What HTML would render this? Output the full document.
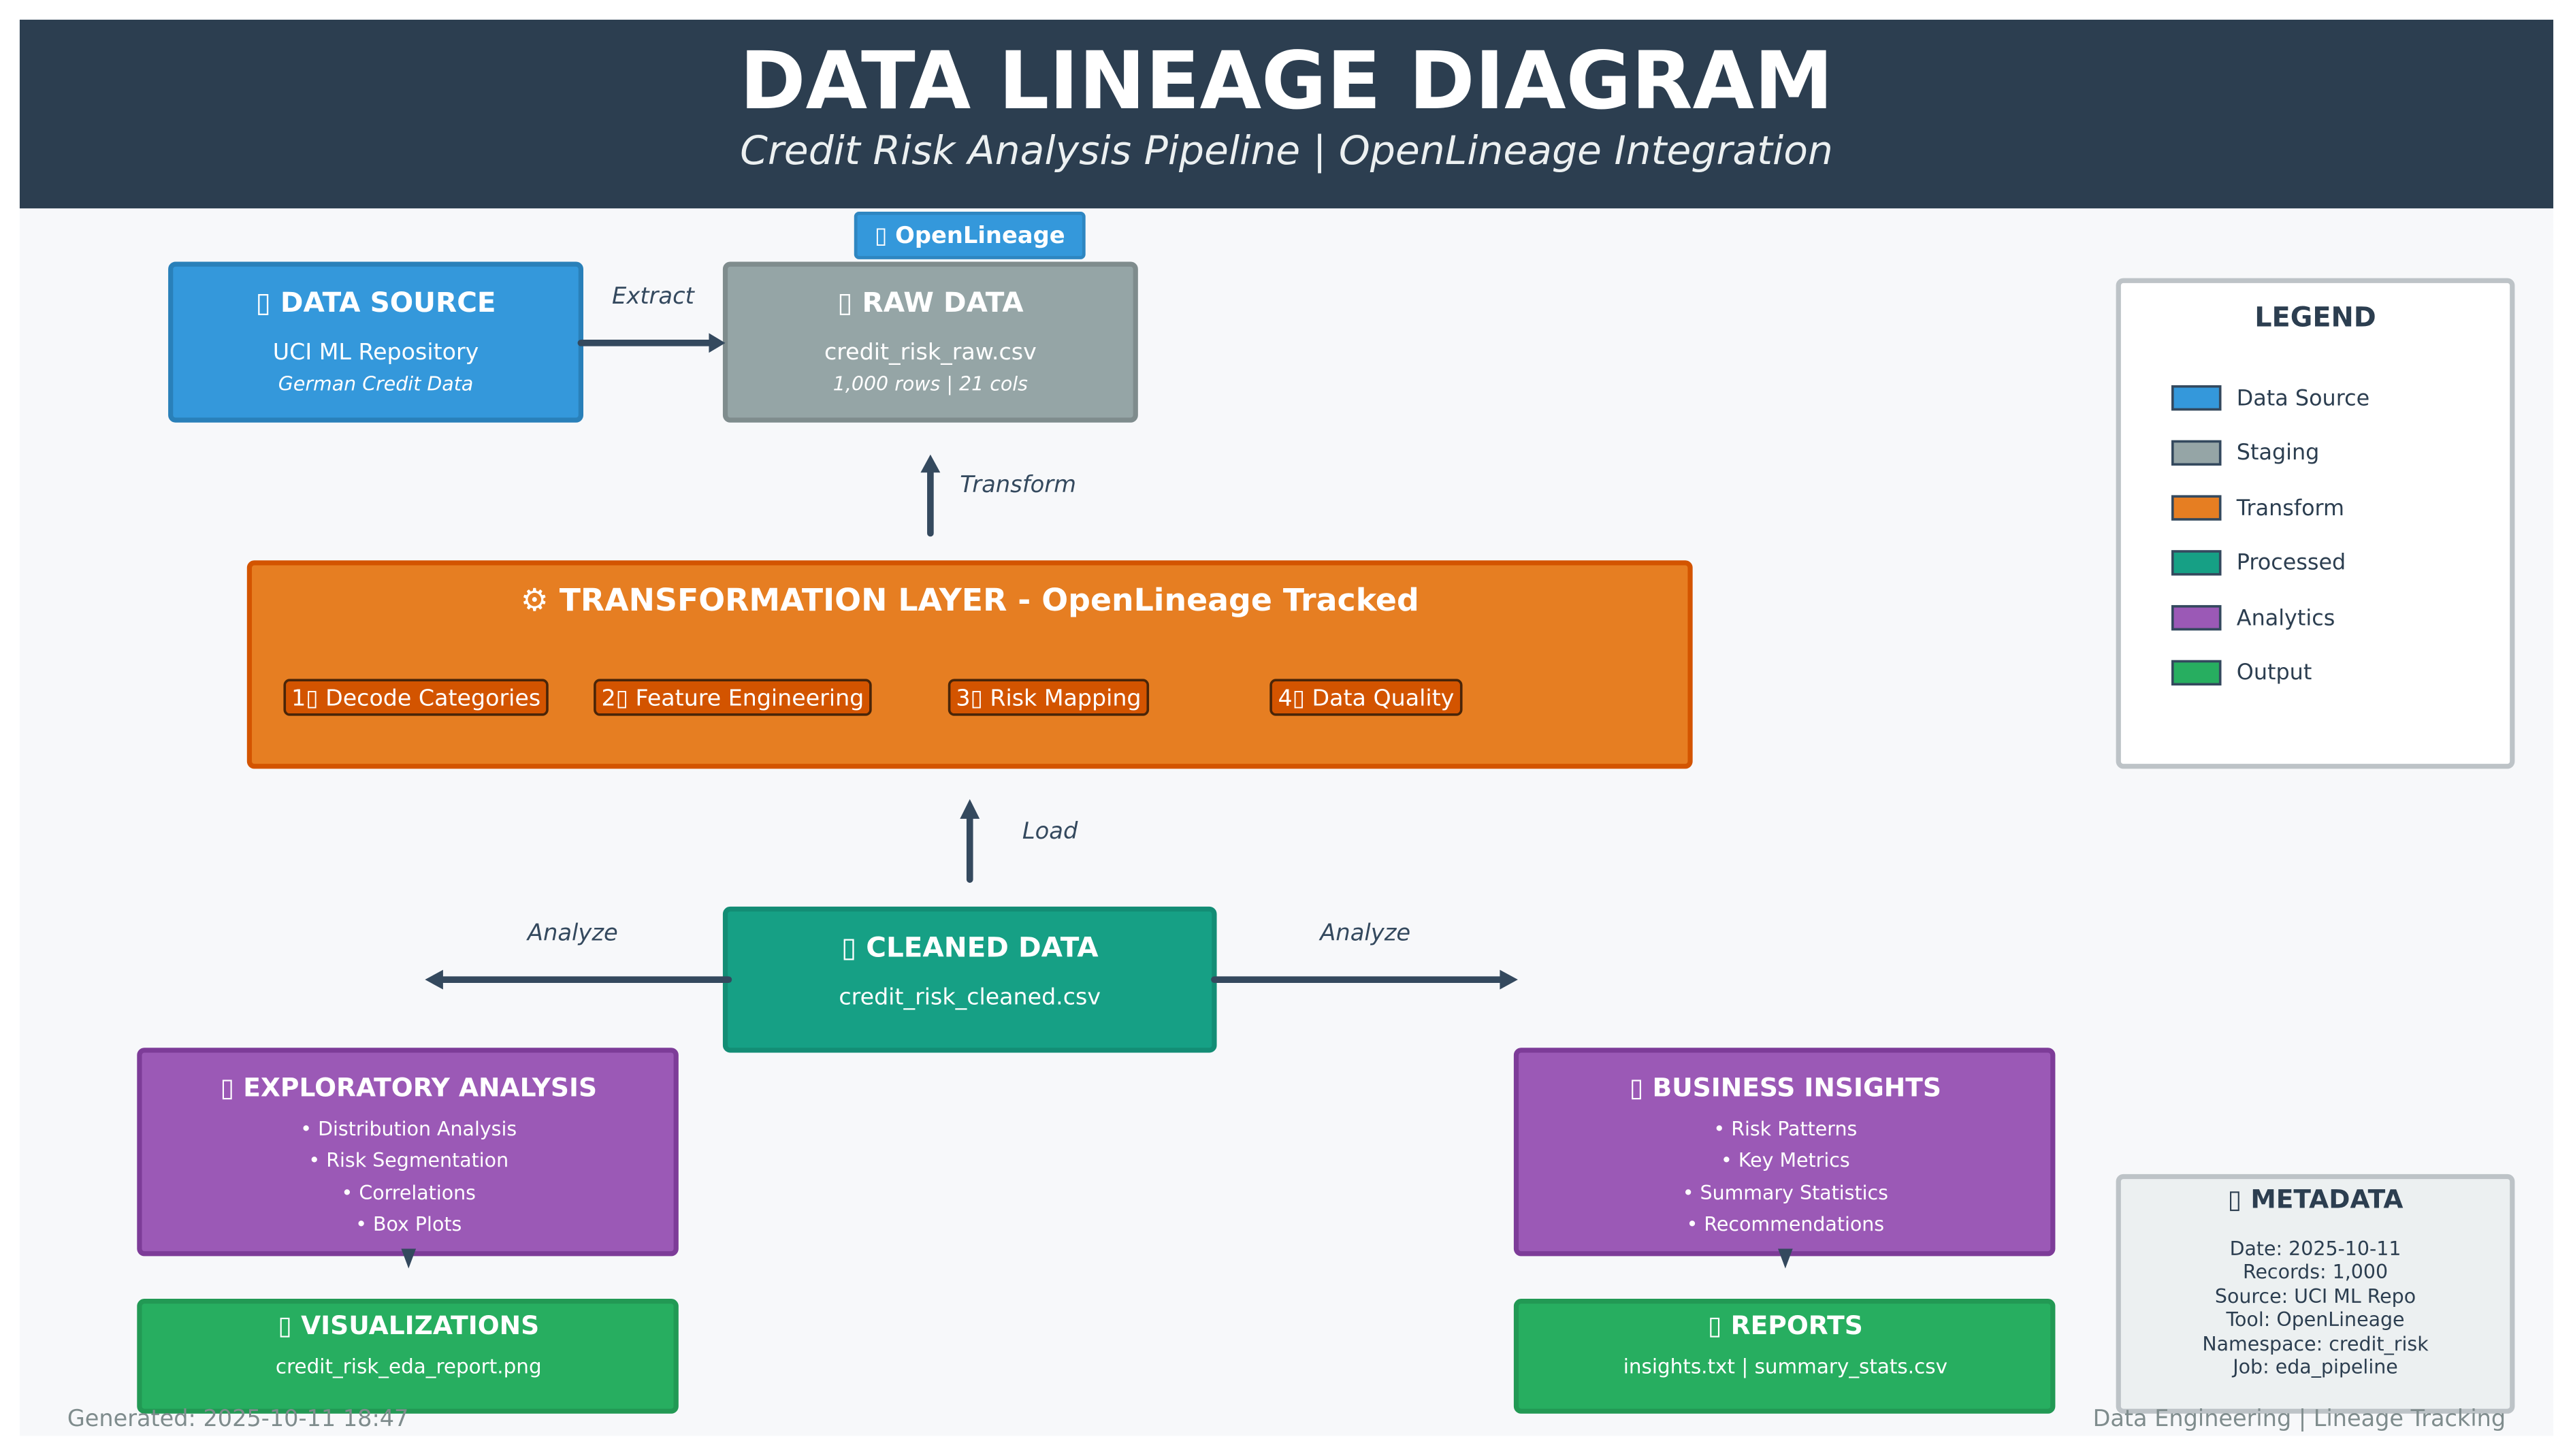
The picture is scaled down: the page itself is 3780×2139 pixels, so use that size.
<!DOCTYPE html>
<html><head><meta charset="utf-8"><style>
html,body{margin:0;padding:0;background:#fff;}
svg{display:block;}
text{font-family:"DejaVu Sans","Liberation Sans",sans-serif;}
</style></head><body>
<svg width="3780" height="2139" viewBox="0 0 1568 887.3" preserveAspectRatio="none" xmlns="http://www.w3.org/2000/svg">
<rect x="0" y="0" width="1568" height="888" fill="#ffffff"/>
<rect x="12" y="12" width="1544" height="863" fill="#f7f8fa"/>
<rect x="12" y="12" width="1544" height="115" fill="#2c3e50"/>
<text x="784" y="66" text-anchor="middle" font-size="48.5" font-weight="bold" fill="#ffffff">DATA LINEAGE DIAGRAM</text>
<text x="784" y="100" text-anchor="middle" font-size="24.2" font-style="italic" fill="#ecf0f1">Credit Risk Analysis Pipeline | OpenLineage Integration</text>

<g stroke-linecap="round">
<rect x="521.5" y="130" width="139" height="27" rx="2" fill="#3498db" stroke="#2e86c1" stroke-width="2"/>
<text x="591" y="148" text-anchor="middle" font-size="14" font-weight="bold" fill="#fff">▯ OpenLineage</text>

<rect x="104" y="161" width="250" height="95" rx="3" fill="#3498db" stroke="#2980b9" stroke-width="3"/>
<text x="229" y="190" text-anchor="middle" font-size="16.8" font-weight="bold" fill="#fff">▯ DATA SOURCE</text>
<text x="229" y="219" text-anchor="middle" font-size="13.8" fill="#fff">UCI ML Repository</text>
<text x="229" y="238" text-anchor="middle" font-size="11.8" font-style="italic" fill="#fff">German Credit Data</text>

<rect x="442" y="161" width="250" height="95" rx="3" fill="#95a5a6" stroke="#7f8c8d" stroke-width="3"/>
<text x="567" y="190" text-anchor="middle" font-size="16.8" font-weight="bold" fill="#fff">▯ RAW DATA</text>
<text x="567" y="219" text-anchor="middle" font-size="13.8" fill="#fff">credit_risk_raw.csv</text>
<text x="567" y="238" text-anchor="middle" font-size="11.8" font-style="italic" fill="#fff">1,000 rows | 21 cols</text>

<line x1="354" y1="209" x2="434" y2="209" stroke="#34495e" stroke-width="4"/>
<path d="M432,203 L442,209 L432,215 Z" fill="#34495e"/>
<text x="398" y="185" text-anchor="middle" font-size="14" font-style="italic" fill="#34495e">Extract</text>

<line x1="567" y1="325" x2="567" y2="286" stroke="#34495e" stroke-width="4"/>
<path d="M561,288 L567,277 L573,288 Z" fill="#34495e"/>
<text x="585" y="300" font-size="14" font-style="italic" fill="#34495e">Transform</text>

<rect x="152" y="343" width="878" height="124" rx="3" fill="#e67e22" stroke="#d35400" stroke-width="3"/>
<text x="591" y="372" text-anchor="middle" font-size="19" font-weight="bold" fill="#fff">⚙ TRANSFORMATION LAYER - OpenLineage Tracked</text>
<g font-size="13.8" fill="#fff" text-anchor="middle">
<rect x="173.5" y="414.5" width="160" height="21" rx="3" fill="#d35400" stroke="#4a2508" stroke-width="1.5"/>
<text x="253.5" y="430">1▯ Decode Categories</text>
<rect x="362.5" y="414.5" width="168" height="21" rx="3" fill="#d35400" stroke="#4a2508" stroke-width="1.5"/>
<text x="446.5" y="430">2▯ Feature Engineering</text>
<rect x="578.5" y="414.5" width="121" height="21" rx="3" fill="#d35400" stroke="#4a2508" stroke-width="1.5"/>
<text x="639" y="430">3▯ Risk Mapping</text>
<rect x="774.5" y="414.5" width="116" height="21" rx="3" fill="#d35400" stroke="#4a2508" stroke-width="1.5"/>
<text x="832.5" y="430">4▯ Data Quality</text>
</g>

<line x1="591" y1="536" x2="591" y2="497" stroke="#34495e" stroke-width="4"/>
<path d="M585,499 L591,487 L597,499 Z" fill="#34495e"/>
<text x="623" y="511" font-size="14" font-style="italic" fill="#34495e">Load</text>

<rect x="442" y="554" width="298" height="86" rx="3" fill="#16a085" stroke="#138d75" stroke-width="3"/>
<text x="591" y="583" text-anchor="middle" font-size="16.8" font-weight="bold" fill="#fff">▯ CLEANED DATA</text>
<text x="591" y="612" text-anchor="middle" font-size="13.8" fill="#fff">credit_risk_cleaned.csv</text>

<line x1="444" y1="597" x2="268" y2="597" stroke="#34495e" stroke-width="4"/>
<path d="M270,591 L259,597 L270,603 Z" fill="#34495e"/>
<text x="349" y="573" text-anchor="middle" font-size="14" font-style="italic" fill="#34495e">Analyze</text>
<line x1="740" y1="597" x2="916" y2="597" stroke="#34495e" stroke-width="4"/>
<path d="M914,591 L925,597 L914,603 Z" fill="#34495e"/>
<text x="832" y="573" text-anchor="middle" font-size="14" font-style="italic" fill="#34495e">Analyze</text>

<rect x="85" y="640" width="327" height="124" rx="3" fill="#9b59b6" stroke="#7d3c98" stroke-width="3"/>
<text x="249" y="668" text-anchor="middle" font-size="15.6" font-weight="bold" fill="#fff">▯ EXPLORATORY ANALYSIS</text>
<g font-size="11.8" fill="#fff" text-anchor="middle">
<text x="249" y="692">• Distribution Analysis</text>
<text x="249" y="711">• Risk Segmentation</text>
<text x="249" y="731">• Correlations</text>
<text x="249" y="750">• Box Plots</text>
</g>
<path d="M244.5,761 L253.5,761 L249,773 Z" fill="#34495e"/>

<rect x="85" y="793" width="327" height="67" rx="3" fill="#27ae60" stroke="#229954" stroke-width="3"/>
<text x="249" y="813" text-anchor="middle" font-size="15.6" font-weight="bold" fill="#fff">▯ VISUALIZATIONS</text>
<text x="249" y="837" text-anchor="middle" font-size="12.2" fill="#fff">credit_risk_eda_report.png</text>

<rect x="924" y="640" width="327" height="124" rx="3" fill="#9b59b6" stroke="#7d3c98" stroke-width="3"/>
<text x="1088" y="668" text-anchor="middle" font-size="15.6" font-weight="bold" fill="#fff">▯ BUSINESS INSIGHTS</text>
<g font-size="11.8" fill="#fff" text-anchor="middle">
<text x="1088" y="692">• Risk Patterns</text>
<text x="1088" y="711">• Key Metrics</text>
<text x="1088" y="731">• Summary Statistics</text>
<text x="1088" y="750">• Recommendations</text>
</g>
<path d="M1083.5,761 L1092.5,761 L1088,773 Z" fill="#34495e"/>

<rect x="924" y="793" width="327" height="67" rx="3" fill="#27ae60" stroke="#229954" stroke-width="3"/>
<text x="1088" y="813" text-anchor="middle" font-size="15.6" font-weight="bold" fill="#fff">▯ REPORTS</text>
<text x="1088" y="837" text-anchor="middle" font-size="12.2" fill="#fff">insights.txt | summary_stats.csv</text>

<rect x="1291" y="171" width="240" height="296" rx="3" fill="#ffffff" stroke="#bdc3c7" stroke-width="3"/>
<text x="1411" y="199" text-anchor="middle" font-size="16.5" font-weight="bold" fill="#2c3e50">LEGEND</text>
<g stroke="#34495e" stroke-width="1.5">
<rect x="1324" y="235.5" width="29" height="14" fill="#3498db"/>
<rect x="1324" y="269" width="29" height="14" fill="#95a5a6"/>
<rect x="1324" y="302.5" width="29" height="14" fill="#e67e22"/>
<rect x="1324" y="336" width="29" height="14" fill="#16a085"/>
<rect x="1324" y="369.5" width="29" height="14" fill="#9b59b6"/>
<rect x="1324" y="403" width="29" height="14" fill="#27ae60"/>
</g>
<g font-size="13.2" fill="#2c3e50">
<text x="1363" y="247">Data Source</text>
<text x="1363" y="280">Staging</text>
<text x="1363" y="314">Transform</text>
<text x="1363" y="347">Processed</text>
<text x="1363" y="381">Analytics</text>
<text x="1363" y="414">Output</text>
</g>

<rect x="1291" y="717" width="240" height="143" rx="3" fill="#ecf0f1" stroke="#bdc3c7" stroke-width="3"/>
<text x="1411" y="736" text-anchor="middle" font-size="15.6" font-weight="bold" fill="#2c3e50">▯ METADATA</text>
<g font-size="11.8" fill="#2c3e50" text-anchor="middle">
<text x="1411" y="765">Date: 2025-10-11</text>
<text x="1411" y="779">Records: 1,000</text>
<text x="1411" y="794">Source: UCI ML Repo</text>
<text x="1411" y="808">Tool: OpenLineage</text>
<text x="1411" y="823">Namespace: credit_risk</text>
<text x="1411" y="837">Job: eda_pipeline</text>
</g>

<text x="41" y="869" font-size="13.9" fill="#7f8c8d">Generated: 2025-10-11 18:47</text>
<text x="1527" y="869" text-anchor="end" font-size="13.9" fill="#7f8c8d">Data Engineering | Lineage Tracking</text>
</g>
</svg>
</body></html>
